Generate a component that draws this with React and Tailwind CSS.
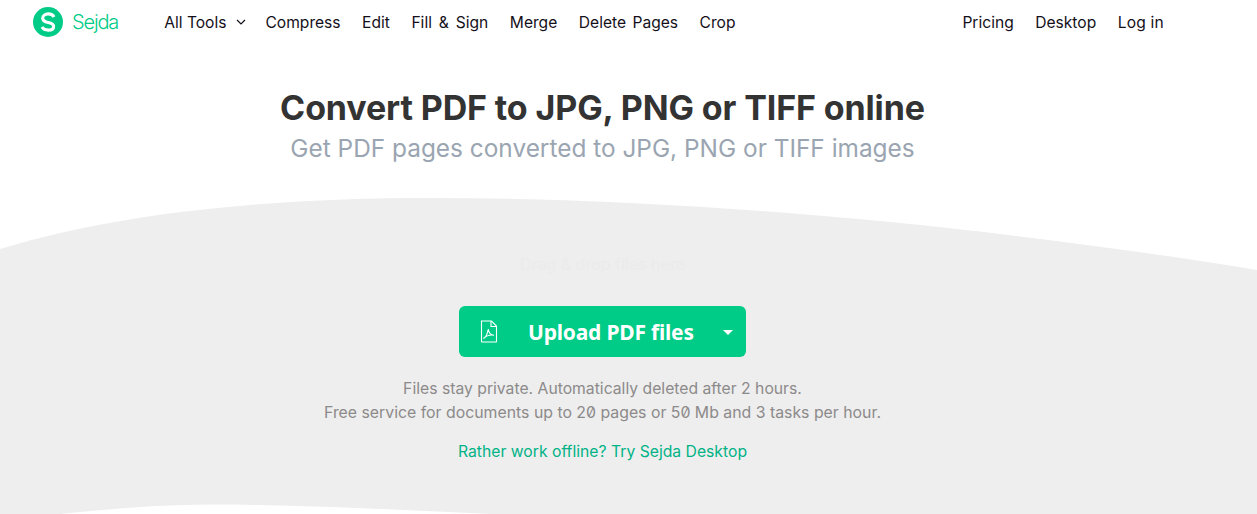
export default function App() {
  return (
    <div className="relative h-[514px] w-full overflow-hidden bg-white font-['Inter',sans-serif] text-[16px]">
      <svg className="absolute left-0 top-0" width="1257" height="514" viewBox="0 0 1257 514" aria-hidden="true">
        <path d="M0 249 C130 209 290 198 430 198 C700 198 1000 228 1257 270 L1257 514 L490 514 C370 508 280 504.5 210 504.5 C160 504.5 110 509 60 514 L0 514 Z" fill="#eeeeee" />
      </svg>
      <div className="relative flex h-full flex-col">
        <nav className="flex h-[45px] items-center justify-between pl-[33px] pr-[93px] text-[15.6px] text-[#14101a]">
          <div className="flex items-center">
            <div className="flex items-center gap-[9px]">
              <svg className="mb-[1px]" width="30" height="30" viewBox="0 0 30 30" aria-hidden="true">
                <circle cx="15" cy="15" r="15" fill="#00cc88" />
                <path d="M21 10C20 7.9 17.8 6.9 15.2 6.9C12 6.9 9.7 8.7 9.7 11.3C9.7 14 12 14.9 15.2 15.5C18.4 16.1 20.6 17 20.6 19.4C20.6 21.8 18.2 23.1 15.3 23.1C12.6 23.1 10.2 22 9 20" fill="none" stroke="#fff" strokeWidth="3.1" />
              </svg>
              <span className="mb-[1px] text-[20px] tracking-[-1.15px] font-light text-[#00cc88]">Sejda</span>
            </div>
            <div className="ml-[46px] flex items-center gap-[21.5px]">
              <div className="mr-[-2.5px] flex items-center gap-[10px]">
                <span>All Tools</span>
                <svg width="10" height="6" viewBox="0 0 10 6" aria-hidden="true">
                  <path d="M1 1L5 5L9 1" fill="none" stroke="#14101a" strokeWidth="1.2" />
                </svg>
              </div>
              <span>Compress</span>
              <span>Edit</span>
              <span className="[word-spacing:2.5px]">Fill &amp; Sign</span>
              <span>Merge</span>
              <span className="[word-spacing:2px]">Delete Pages</span>
              <span>Crop</span>
            </div>
          </div>
          <div className="flex items-center gap-[21.5px]">
            <span>Pricing</span>
            <span>Desktop</span>
            <span className="tracking-[0.2px]">Log in</span>
          </div>
        </nav>
        <main className="flex flex-col items-center pr-[52px]">
          <h1 className="mt-[41px] text-[34px] font-[750] leading-[44px] tracking-[-0.12px] text-[#333333]">
            Convert PDF to JPG, PNG or TIFF online
          </h1>
          <h2 className="mt-[3px] text-[24.4px] font-normal leading-[30px] text-[#9aa5b1]">
            Get PDF pages converted to JPG, PNG or TIFF images
          </h2>
          <p className="mt-[89px] text-[16px] leading-[24px] text-[#ebebeb]">Drag &amp; drop files here</p>
          <button className="mt-[30px] flex h-[51px] w-[287px] items-center rounded-[6px] bg-[#00cc88] pl-[21px] text-white">
            <svg width="18" height="23" viewBox="0 0 18 23" aria-hidden="true">
              <path d="M1.5 1H11.5L16.5 6V21.5C16.5 21.8 16.3 22 16 22H2C1.7 22 1.5 21.8 1.5 21.5Z M11 1V6.5H16.5" fill="none" stroke="#fff" strokeWidth="1.1" />
              <path d="M3.5 18.5C5.5 17.5 7.5 13.5 8.2 9C8.7 12.5 10.5 15 14 15.2C11 14.8 6.5 15.5 3.5 18.5Z" fill="none" stroke="#fff" strokeWidth="1.1" />
            </svg>
            <span className="ml-[30px] pt-[2px] font-['Noto_Sans',sans-serif] text-[21px] font-bold tracking-[-0.2px]">Upload PDF files</span>
            <svg className="ml-[29px] mt-[2px]" width="10" height="5" viewBox="0 0 10 5" aria-hidden="true">
              <path d="M0 0H10L5 5Z" fill="#fff" />
            </svg>
          </button>
          <div className="mt-[20px] text-center leading-[24px] text-[#8c8a8a] [font-feature-settings:'zero']">
            <p className="text-[15.72px]">Files stay private. Automatically deleted after 2 hours.</p>
            <p className="text-[15.84px]">Free service for documents up to 20 pages or 50 Mb and 3 tasks per hour.</p>
          </div>
          <a className="mt-[15px] text-[15.73px] leading-[24px] text-[#00b386]" href="#">Rather work offline? Try Sejda Desktop</a>
        </main>
      </div>
    </div>
  );
}
